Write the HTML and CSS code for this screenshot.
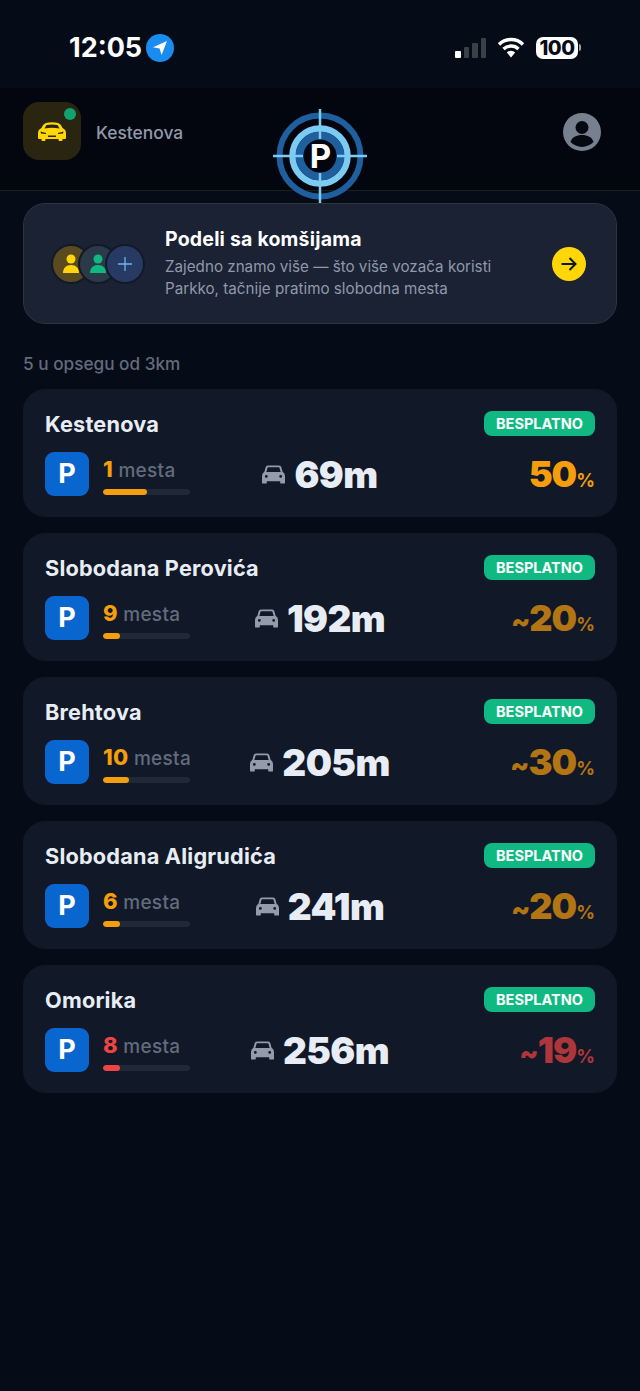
FILE: index.html
```html
<!DOCTYPE html>
<html lang="sr">
<head>
    <meta charset="UTF-8">
    <meta name="viewport" content="width=device-width, initial-scale=1.0">
    <title>Parkko</title>
    <link rel="stylesheet" href="styles.css">
</head>
<body>
    <svg class="sprites" width="0" height="0">
        <symbol id="car" viewBox="0 0 24 19">
            <path d="M4 1.500Q4.500 0 7 0H17Q19.500 0 20 1.500L21.500 6.500Q24 8 24 11V18Q24 19 23 19H20Q19 19 19 18V16.500H5V18Q5 19 4 19H1Q0 19 0 18V11Q0 8 2.500 6.500ZM6 2 4.500 7H19.500L18 2ZM4.500 10a1.500 1.500 0 1 0 0 3 1.500 1.500 0 0 0 0-3zM19.500 10a1.500 1.500 0 1 0 0 3 1.500 1.500 0 0 0 0-3z" fill="currentColor" fill-rule="evenodd"/>
        </symbol>
        <symbol id="sports-car" viewBox="0 0 28 19">
            <path d="M8 1Q14-.5 20 1 23 2 24.500 6 28 7.500 28 11V16Q28 17 27 17H24.500V18Q24.500 19 23.500 19H21.500Q20.500 19 20.500 18V17H7.500V18Q7.500 19 6.500 19H4.500Q3.500 19 3.500 18V17H1Q0 17 0 16V11Q0 7.500 3.500 6 5 2 8 1ZM8.500 3 6.500 6.500Q14 5 21.500 6.500L19.500 3Q14 1.800 8.500 3ZM2.500 9.500 3 11.500 8 12 8 11ZM25.500 9.500 20 11 20 12 25 11.500ZM10 13.500V15H18V13.500Z" fill="currentColor" fill-rule="evenodd"/>
        </symbol>
    </svg>

    <div class="status-bar">
        <div class="status-left">
            <span class="time">12:05</span>
            <span class="location">
                <svg width="18" height="18" viewBox="0 0 18 18"><path d="M16 2 2 8.200l6.600 1.200L10.600 16z" fill="#fff"/></svg>
            </span>
        </div>
        <div class="status-right">
            <div class="signal"><i class="on"></i><i></i><i></i><i></i></div>
            <svg class="wifi" width="28" height="21" viewBox="0 0 28 21">
                <path d="M2 7.500a17 17 0 0 1 24 0M6.500 12a11 11 0 0 1 15 0" fill="none" stroke="#fff" stroke-width="3.400"/>
                <path d="M9.800 15.500a6.500 6.500 0 0 1 8.400 0L14 20.500z" fill="#fff"/>
            </svg>
            <div class="battery"><span class="battery-level">100</span><i class="battery-tip"></i></div>
        </div>
    </div>

    <header class="app-header">
        <div class="current-spot">
            <div class="car-tile">
                <svg class="car-yellow" width="28" height="19"><use href="#sports-car"/></svg>
                <i class="online-dot"></i>
            </div>
            <span class="current-name">Kestenova</span>
        </div>
        <svg class="profile" width="38" height="38" viewBox="0 0 38 38">
            <circle cx="19" cy="19" r="19" fill="#77808f"/>
            <circle cx="19" cy="14.500" r="6.500" fill="#050912"/>
            <path d="M7.500 29c1.500-5 6-7 11.500-7s10 2 11.500 7a16 16 0 0 1-23 0z" fill="#050912"/>
        </svg>
        <svg class="logo" width="94" height="94" viewBox="0 0 94 94">
            <circle cx="47" cy="47" r="40.500" fill="none" stroke="#1f5f9e" stroke-width="6"/>
            <circle cx="47" cy="47" r="27.500" fill="none" stroke="#7ccbf2" stroke-width="6.500"/>
            <circle cx="47" cy="47" r="20.500" fill="none" stroke="#1f5f9e" stroke-width="8"/>
            <path d="M47 0v30M47 64v30M0 47h30M64 47h30" stroke="#7ccbf2" stroke-width="2.500"/>
            <text x="47.500" y="59" class="logo-letter" text-anchor="middle">P</text>
        </svg>
    </header>

    <main class="content">
        <section class="share-card">
            <div class="avatars">
                <span class="avatar avatar-yellow">
                    <svg width="18" height="20" viewBox="0 0 18 20"><circle cx="9" cy="5" r="4.500" fill="currentColor"/><path d="M1 19c0-5 3-8 8-8s8 3 8 8z" fill="currentColor"/></svg>
                </span>
                <span class="avatar avatar-green">
                    <svg width="18" height="20" viewBox="0 0 18 20"><circle cx="9" cy="5" r="4.500" fill="currentColor"/><path d="M1 19c0-5 3-8 8-8s8 3 8 8z" fill="currentColor"/></svg>
                </span>
                <span class="avatar avatar-blue">
                    <svg width="14" height="14" viewBox="0 0 14 14"><path d="M7 0v14M0 7h14" stroke="currentColor" stroke-width="1.300"/></svg>
                </span>
            </div>
            <div class="share-text">
                <h2>Podeli sa komšijama</h2>
                <p>Zajedno znamo više — što više vozača koristi<br>Parkko, tačnije pratimo slobodna mesta</p>
            </div>
            <span class="share-arrow">
                <svg width="18" height="16" viewBox="0 0 18 16"><path d="M1.500 8h14M9.500 2l6 6-6 6" fill="none" stroke="#11151f" stroke-width="2"/></svg>
            </span>
        </section>

        <p class="range-label">5 u opsegu od 3km</p>

        <section class="spot-list">
            <article class="spot">
                <div class="spot-top">
                    <h3>Kestenova</h3>
                    <span class="badge">BESPLATNO</span>
                </div>
                <div class="spot-row">
                    <div class="spot-left">
                        <span class="p-icon">P</span>
                        <div class="spot-places">
                            <div class="places-text"><b class="amber">1</b> mesta</div>
                            <div class="bar"><div class="bar-fill bg-amber" style="width: 50%"></div></div>
                        </div>
                    </div>
                    <div class="spot-distance">
                        <svg class="car-grey" width="23" height="19"><use href="#car"/></svg>
                        <span>69m</span>
                    </div>
                    <div class="spot-percent amber">50<small>%</small></div>
                </div>
            </article>

            <article class="spot">
                <div class="spot-top">
                    <h3>Slobodana Perovića</h3>
                    <span class="badge">BESPLATNO</span>
                </div>
                <div class="spot-row">
                    <div class="spot-left">
                        <span class="p-icon">P</span>
                        <div class="spot-places">
                            <div class="places-text"><b class="amber">9</b> mesta</div>
                            <div class="bar"><div class="bar-fill bg-amber" style="width: 20%"></div></div>
                        </div>
                    </div>
                    <div class="spot-distance">
                        <svg class="car-grey" width="23" height="19"><use href="#car"/></svg>
                        <span>192m</span>
                    </div>
                    <div class="spot-percent amber faded"><span class="approx">~</span>20<small>%</small></div>
                </div>
            </article>

            <article class="spot">
                <div class="spot-top">
                    <h3>Brehtova</h3>
                    <span class="badge">BESPLATNO</span>
                </div>
                <div class="spot-row">
                    <div class="spot-left">
                        <span class="p-icon">P</span>
                        <div class="spot-places">
                            <div class="places-text"><b class="amber">10</b> mesta</div>
                            <div class="bar"><div class="bar-fill bg-amber" style="width: 30%"></div></div>
                        </div>
                    </div>
                    <div class="spot-distance">
                        <svg class="car-grey" width="23" height="19"><use href="#car"/></svg>
                        <span>205m</span>
                    </div>
                    <div class="spot-percent amber faded"><span class="approx">~</span>30<small>%</small></div>
                </div>
            </article>

            <article class="spot">
                <div class="spot-top">
                    <h3>Slobodana Aligrudića</h3>
                    <span class="badge">BESPLATNO</span>
                </div>
                <div class="spot-row">
                    <div class="spot-left">
                        <span class="p-icon">P</span>
                        <div class="spot-places">
                            <div class="places-text"><b class="amber">6</b> mesta</div>
                            <div class="bar"><div class="bar-fill bg-amber" style="width: 20%"></div></div>
                        </div>
                    </div>
                    <div class="spot-distance">
                        <svg class="car-grey" width="23" height="19"><use href="#car"/></svg>
                        <span>241m</span>
                    </div>
                    <div class="spot-percent amber faded"><span class="approx">~</span>20<small>%</small></div>
                </div>
            </article>

            <article class="spot">
                <div class="spot-top">
                    <h3>Omorika</h3>
                    <span class="badge">BESPLATNO</span>
                </div>
                <div class="spot-row">
                    <div class="spot-left">
                        <span class="p-icon">P</span>
                        <div class="spot-places">
                            <div class="places-text"><b class="red">8</b> mesta</div>
                            <div class="bar"><div class="bar-fill bg-red" style="width: 19%"></div></div>
                        </div>
                    </div>
                    <div class="spot-distance">
                        <svg class="car-grey" width="23" height="19"><use href="#car"/></svg>
                        <span>256m</span>
                    </div>
                    <div class="spot-percent red faded"><span class="approx">~</span>19<small>%</small></div>
                </div>
            </article>
        </section>
    </main>
</body>
</html>
```

FILE: styles.css
```css
* {
    box-sizing: border-box;
    margin: 0;
    padding: 0;
}

body {
    font-family: 'Inter', 'Noto Sans', sans-serif;
    background-color: #060b18;
    color: #e8edf5;
    min-height: 1391px;
}

.sprites {
    position: absolute;
}

/* Status bar */
.status-bar {
    height: 88px;
    padding: 7px 59px 0 69px;
    display: flex;
    align-items: center;
    justify-content: space-between;
}

.status-left {
    display: flex;
    align-items: center;
    gap: 4px;
}

.time {
    font-size: 27px;
    font-weight: 700;
    color: #fff;
}

.location {
    width: 28px;
    height: 28px;
    border-radius: 50%;
    background-color: #1a8cf0;
    display: flex;
    align-items: center;
    justify-content: center;
}

.status-right {
    display: flex;
    align-items: center;
    gap: 11px;
}

.signal {
    display: flex;
    align-items: flex-end;
    gap: 3px;
    height: 20px;
}

.signal i {
    display: block;
    width: 5.500px;
    background-color: #3a4048;
    border-radius: 1px;
}

.signal i:nth-child(1) { height: 7px; }
.signal i:nth-child(2) { height: 11px; }
.signal i:nth-child(3) { height: 15px; }
.signal i:nth-child(4) { height: 20px; }

.signal i.on {
    background-color: #fff;
}

.battery {
    display: flex;
    align-items: center;
    gap: 1px;
}

.battery-level {
    width: 42px;
    height: 22px;
    border-radius: 7px;
    background-color: #fff;
    color: #060b18;
    font-size: 20px;
    font-weight: 800;
    line-height: 22px;
    text-align: center;
    letter-spacing: -0.5px;
}

.battery-tip {
    display: block;
    width: 2px;
    height: 7px;
    background-color: #9a9ea6;
    border-radius: 0 2px 2px 0;
}

/* Header */
.app-header {
    position: relative;
    height: 103px;
    padding: 14px 39px 0 23px;
    background-color: #03060f;
    border-bottom: 1px solid #1a2118;
    display: flex;
    align-items: flex-start;
    justify-content: space-between;
}

.current-spot {
    display: flex;
    align-items: center;
    gap: 15px;
}

.car-tile {
    position: relative;
    width: 58px;
    height: 58px;
    border-radius: 16px;
    background-color: #2a2510;
    display: flex;
    align-items: center;
    justify-content: center;
}

.car-yellow {
    color: #ffd60a;
}

.online-dot {
    position: absolute;
    top: 6px;
    right: 5px;
    width: 12px;
    height: 12px;
    border-radius: 50%;
    background-color: #10a36f;
}

.current-name {
    padding-top: 2px;
    font-size: 17.400px;
    font-weight: 500;
    color: #8f99aa;
}

.profile {
    margin-top: 11px;
}

.logo {
    position: absolute;
    top: 21px;
    left: 273px;
}

.logo-letter {
    font-family: 'Inter', sans-serif;
    font-size: 33px;
    font-weight: 700;
    fill: #fff;
}

.content {
    padding: 12px 23px 0;
}

/* Share banner */
.share-card {
    height: 121px;
    padding: 0 30px 0 27px;
    border: 1px solid #2f3436;
    border-radius: 22px;
    background-color: #1a2233;
    display: flex;
    align-items: center;
}

.avatars {
    display: flex;
    width: 92px;
    margin-right: 22px;
}

.avatar {
    width: 40px;
    height: 40px;
    border-radius: 50%;
    border: 2px solid #121a28;
    display: flex;
    align-items: center;
    justify-content: center;
    flex: none;
}

.avatar + .avatar {
    margin-left: -13px;
}

.avatar-yellow {
    background-color: #594a1f;
    color: #ffd60a;
}

.avatar-green {
    background-color: #2a3a48;
    color: #10b981;
}

.avatar-blue {
    background-color: #263a64;
    color: #6db5ea;
}

.share-text {
    flex: 1;
}

.share-text h2 {
    font-size: 19.500px;
    font-weight: 700;
    letter-spacing: 0.2px;
    color: #fff;
    margin-bottom: 5px;
}

.share-text p {
    font-size: 15.200px;
    line-height: 22px;
    color: #8f99aa;
}

.share-arrow {
    width: 34px;
    height: 34px;
    border-radius: 50%;
    background-color: #ffd60a;
    display: flex;
    align-items: center;
    justify-content: center;
}

.range-label {
    margin: 30px 0 15px;
    font-size: 17.200px;
    font-weight: 500;
    line-height: 20px;
    color: #626c7d;
}

/* Parking list */
.spot-list {
    display: flex;
    flex-direction: column;
    gap: 16px;
}

.spot {
    height: 128px;
    padding: 21px 21px 0;
    border: 1px solid #14191f;
    border-radius: 22px;
    background-color: #111827;
}

.spot-top {
    display: flex;
    align-items: center;
    justify-content: space-between;
    height: 25px;
}

.spot-top h3 {
    font-size: 21.700px;
    font-weight: 700;
    letter-spacing: 0.2px;
    color: #e8edf5;
}

.badge {
    width: 111px;
    height: 25px;
    border-radius: 8px;
    background-color: #10b981;
    color: #fff;
    font-size: 14.500px;
    font-weight: 700;
    line-height: 25px;
    text-align: center;
}

.spot-row {
    display: grid;
    grid-template-columns: 1fr auto 1fr;
    grid-template-rows: 44px;
    align-items: center;
    margin-top: 16px;
}

.spot-left {
    display: flex;
    align-items: center;
    gap: 14px;
}

.p-icon {
    width: 44px;
    height: 44px;
    border-radius: 9px;
    background-color: #0a66cf;
    color: #fff;
    font-size: 27px;
    font-weight: 700;
    line-height: 44px;
    text-align: center;
}

.spot-places {
    width: 87px;
    margin-top: 4px;
}

.places-text {
    font-size: 19px;
    font-weight: 500;
    letter-spacing: 0.3px;
    line-height: 24px;
    color: #626c7d;
    white-space: nowrap;
    margin-bottom: 6px;
}

.places-text b {
    font-size: 22px;
    font-weight: 800;
}

.bar {
    height: 6px;
    border-radius: 3px;
    background-color: #1f2937;
    overflow: hidden;
}

.bar-fill {
    height: 100%;
    border-radius: 3px;
}

.bg-amber { background-color: #f59e0b; }
.bg-red { background-color: #ef4444; }
.amber { color: #f59e0b; }
.red { color: #ef4444; }

.spot-distance {
    display: flex;
    align-items: center;
    gap: 9px;
    font-size: 37px;
    font-weight: 900;
    letter-spacing: -0.6px;
    color: #e8edf5;
}

.car-grey {
    color: #939cab;
}

.spot-percent {
    text-align: right;
    font-size: 36px;
    font-weight: 900;
    letter-spacing: -1px;
}

.spot-percent .approx {
    font-size: 28px;
}

.spot-percent small {
    font-size: 18.500px;
    font-weight: 700;
    letter-spacing: 0;
}

.faded {
    opacity: 0.7;
}
```
